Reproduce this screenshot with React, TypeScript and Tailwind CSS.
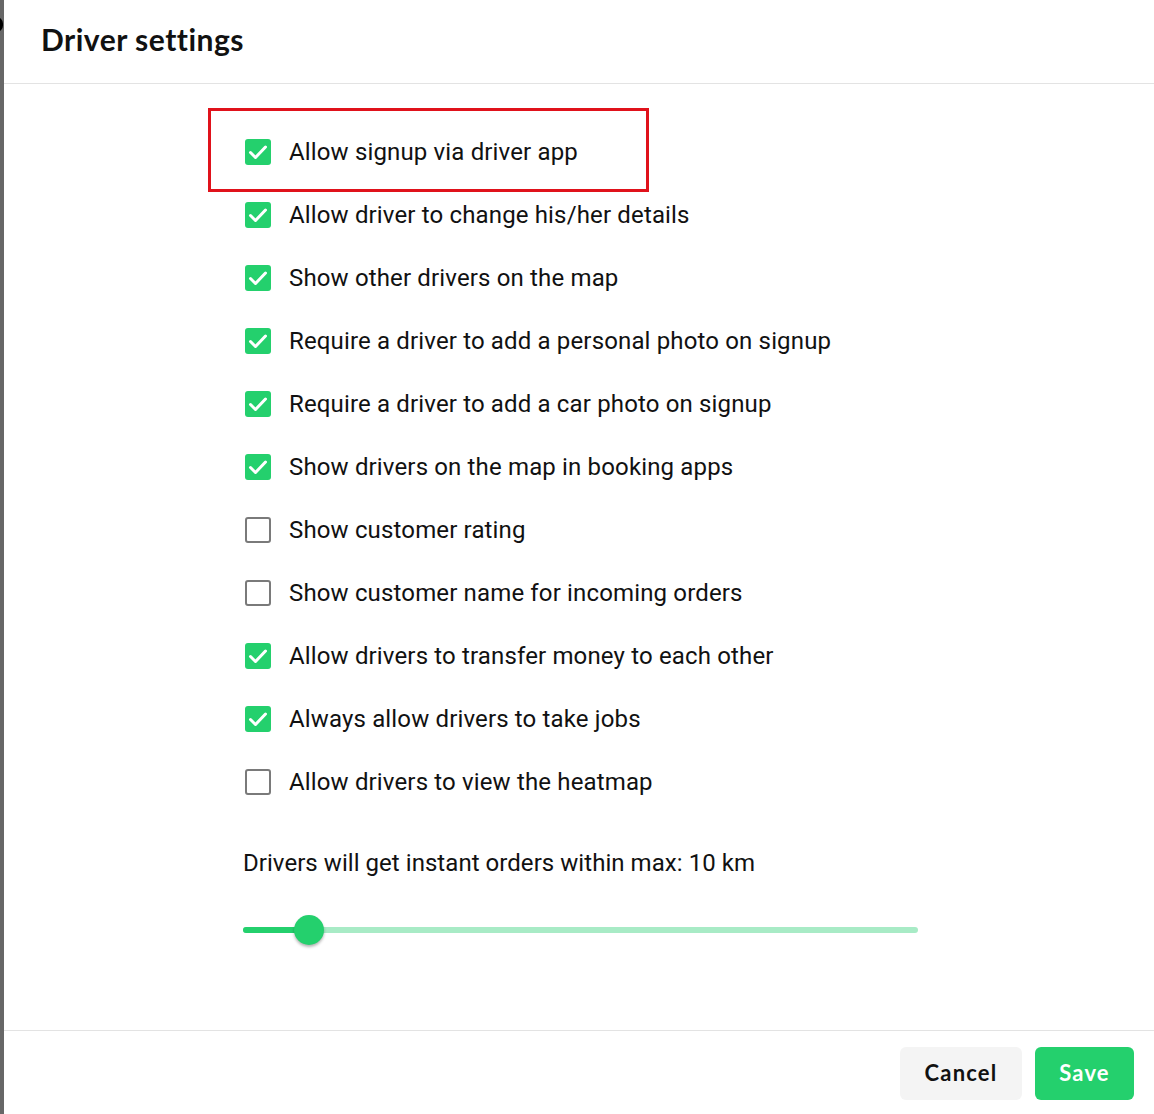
const options = [
  { label: "Allow signup via driver app", checked: true, highlight: true },
  { label: "Allow driver to change his/her details", checked: true },
  { label: "Show other drivers on the map", checked: true },
  { label: "Require a driver to add a personal photo on signup", checked: true },
  { label: "Require a driver to add a car photo on signup", checked: true },
  { label: "Show drivers on the map in booking apps", checked: true },
  { label: "Show customer rating", checked: false },
  { label: "Show customer name for incoming orders", checked: false },
  { label: "Allow drivers to transfer money to each other", checked: true },
  { label: "Always allow drivers to take jobs", checked: true },
  { label: "Allow drivers to view the heatmap", checked: false },
];

const Checkbox = ({ checked }: { checked: boolean }) =>
  checked ? (
    <span className="flex h-[26px] w-[26px] shrink-0 items-center justify-center rounded-[3px] bg-[#24d06d]">
      <svg width="26" height="26" viewBox="0 0 26 26" fill="none">
        <path d="M5.5 13.5l5 5 10-10.5" stroke="white" strokeWidth="3" strokeLinecap="round" strokeLinejoin="round" />
      </svg>
    </span>
  ) : (
    <span className="h-[26px] w-[26px] shrink-0 rounded-[3px] border-[2.5px] border-[#7a7a7a] bg-white" />
  );

export default function App() {
  return (
    <div className="flex h-[1114px] w-full overflow-hidden bg-white" style={{ fontFamily: "Roboto, sans-serif" }}>
      {/* backdrop strip behind the modal */}
      <div className="relative w-[4px] shrink-0 overflow-hidden bg-[#676767]">
        <span className="absolute left-[-10px] top-[17px] h-[15px] w-[13px] rounded-full border-[3px] border-black" />
      </div>

      <div className="flex flex-1 flex-col">
        <div className="flex h-[84px] items-center border-b border-[#e3e3e3] pl-[37px]">
          <h1 className="pb-[4px] text-[30px] font-bold tracking-[0.5px] text-[#111]" style={{ fontFamily: "Lato, sans-serif" }}>
            Driver settings
          </h1>
        </div>

        <div className="flex-1 pl-[239px] pt-[36px]">
          {options.map((o) => (
            <div key={o.label} className="relative flex h-[63px] items-center gap-[18px] pl-[2px]">
              {o.highlight && (
                <div className="absolute left-[-35px] top-[-12px] h-[84px] w-[441px] border-[3px] border-[#e0121b]" />
              )}
              <Checkbox checked={o.checked} />
              <span className="text-[24px] tracking-[0.15px] text-[#111]">{o.label}</span>
            </div>
          ))}

          <p className="mt-[32px] text-[24px] tracking-[0.05px] text-[#111]">Drivers will get instant orders within max: 10 km</p>

          <div className="relative mt-[34px] h-[30px] w-[675px]">
            <div className="absolute left-0 right-0 top-[12px] h-[6px] rounded-full bg-[#a8ebc6]" />
            <div className="absolute left-0 top-[12px] h-[6px] w-[66px] rounded-full bg-[#24d06d]" />
            <div className="absolute left-[51px] top-0 h-[30px] w-[30px] rounded-full bg-[#24d06d] shadow-[0_2px_3px_rgba(0,0,0,0.3)]" />
          </div>
        </div>

        <div className="flex h-[84px] items-start justify-end gap-[13px] border-t border-[#e3e3e3] pr-[20px] pt-[16px]" style={{ fontFamily: "Lato, sans-serif" }}>
          <button className="h-[53px] w-[122px] rounded-[6px] bg-[#f4f4f4] pb-[2px] text-[22px] font-bold tracking-[1.2px] text-[#111]">
            Cancel
          </button>
          <button className="h-[53px] w-[99px] rounded-[6px] bg-[#24d06d] pb-[2px] text-[22px] font-bold tracking-[1.2px] text-white">
            Save
          </button>
        </div>
      </div>
    </div>
  );
}
